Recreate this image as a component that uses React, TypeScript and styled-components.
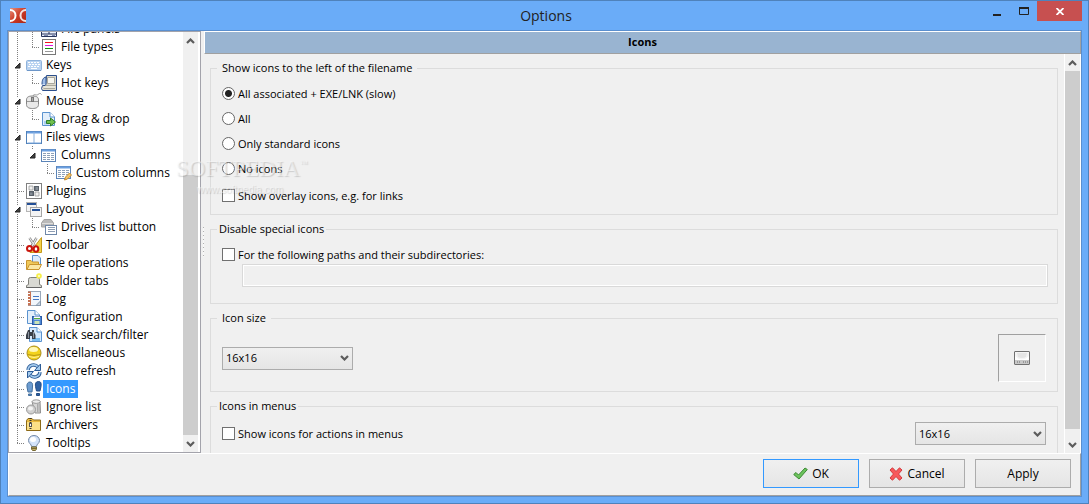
import React, { useState } from "react";
import styled, { createGlobalStyle, css } from "styled-components";

const GlobalStyle = createGlobalStyle`
  * { box-sizing: border-box; }
  body {
    margin: 0;
    font-family: "Open Sans", "Noto Sans", sans-serif;
    font-size: 11px;
    line-height: 16px;
    color: #000;
  }
  button, select, input { font: inherit; color: inherit; margin: 0; }
`;

/* ---------- window frame ---------- */

const Window = styled.div`
  position: relative;
  display: flex;
  flex-direction: column;
  height: 100vh;
  min-height: 300px;
  padding: 0 6px 6px;
  background: #6aacf8;
  border: 1px solid #4f82bb;
`;

const TitleBar = styled.header`
  flex: none;
  display: grid;
  grid-template-columns: 1fr auto 1fr;
  align-items: center;
  height: 29px;
  padding-left: 3px;
`;

const Title = styled.h1`
  margin: 0;
  font-size: 14px;
  line-height: 20px;
  font-weight: 400;
  color: #222;
`;

const Controls = styled.div`
  justify-self: end;
  align-self: start;
  display: flex;
`;

const ControlButton = styled.button<{ $close?: boolean }>`
  display: grid;
  place-items: center;
  width: ${(p) => (p.$close ? 45 : 27)}px;
  height: 20px;
  padding: 0;
  border: 0;
  background: ${(p) => (p.$close ? "#c75050" : "transparent")};
`;

const Client = styled.div`
  flex: 1;
  min-height: 0;
  display: flex;
  flex-direction: column;
  background: #f0f0f0;
  border: 1px solid #5a8fcf;
`;

const Body = styled.div`
  flex: 1;
  min-height: 0;
  display: grid;
  grid-template-columns: 193px 3px minmax(0, 1fr);
`;

const Splitter = styled.div`
  justify-self: end;
  align-self: center;
  width: 1px;
  height: 30px;
  background: repeating-linear-gradient(#b0b0b0 0 1px, #f8f8f8 1px 4px);
`;

/* ---------- scroll bars ---------- */

const ScrollTrack = styled.div`
  flex: none;
  display: flex;
  flex-direction: column;
  width: 15px;
  background: #f0f0f0;
`;

const ScrollArrow = styled.button`
  flex: none;
  display: grid;
  place-items: center;
  height: 17px;
  padding: 0;
  border: 0;
  background: transparent;
`;

const ScrollSpace = styled.div<{ $share: number; $thumb?: boolean }>`
  flex: ${(p) => p.$share} 1 0;
  background: ${(p) => (p.$thumb ? "#cdcdcd" : "transparent")};
`;

const Chevron = ({ up }: { up?: boolean }) => (
  <svg width="9" height="6" viewBox="0 0 9 6" aria-hidden="true">
    <path
      d={up ? "M1 5L4.500 1.500L8 5" : "M1 1L4.500 4.500L8 1"}
      fill="none"
      stroke="#5c5c5c"
      strokeWidth="2.200"
    />
  </svg>
);

function ScrollBar({ before, thumb, after }: { before: number; thumb: number; after: number }) {
  return (
    <ScrollTrack>
      <ScrollArrow aria-label="Scroll up"><Chevron up /></ScrollArrow>
      <ScrollSpace $share={before} />
      <ScrollSpace $share={thumb} $thumb />
      <ScrollSpace $share={after} />
      <ScrollArrow aria-label="Scroll down"><Chevron /></ScrollArrow>
    </ScrollTrack>
  );
}

/* ---------- tree ---------- */

const TreePanel = styled.nav`
  display: flex;
  min-height: 0;
  padding-right: 2px;
  background: #fff;
  border: 1px solid #a3a3ab;
`;

const TreeList = styled.ul`
  flex: 1;
  min-height: 0;
  display: flex;
  flex-direction: column;
  justify-content: flex-end;
  margin: 0;
  padding: 0 0 0 1px;
  overflow: hidden;
  list-style: none;
`;

const TreeRow = styled.li`
  flex: none;
  display: flex;
  align-items: center;
  height: 18px;
`;

type Guide = "line" | "tee" | "end" | "open" | "openTop" | "none";

const vertical = "repeating-linear-gradient(#808080 0 1px, transparent 1px 2px)";
const horizontal = "repeating-linear-gradient(90deg, #808080 0 1px, transparent 1px 2px)";

const GuideCell = styled.span<{ $kind: Guide }>`
  display: grid;
  place-items: center;
  width: 15px;
  height: 18px;
  background-repeat: no-repeat;
  ${(p) => (p.$kind === "line" || p.$kind === "open") && css`
    background-image: ${vertical};
    background-size: 1px 18px;
    background-position: 7px 0;
  `}
  ${(p) => p.$kind === "openTop" && css`
    background-image: ${vertical};
    background-size: 1px 4px;
    background-position: 7px 0;
  `}
  ${(p) => (p.$kind === "tee" || p.$kind === "end") && css`
    background-image: ${vertical}, ${horizontal};
    background-size: 1px ${p.$kind === "tee" ? 18 : 10}px, 8px 1px;
    background-position: 7px 0, 7px 9px;
  `}
`;

const TreeIcon = styled.svg`
  flex: none;
  width: 16px;
  height: 16px;
  margin: 0 1px;
`;

const TreeLabel = styled.a<{ $selected?: boolean }>`
  padding: 0 3px;
  font-size: 12px;
  line-height: 18px;
  text-decoration: none;
  white-space: nowrap;
  color: ${(p) => (p.$selected ? "#fff" : "#000")};
  background: ${(p) => (p.$selected ? "#3399ff" : "transparent")};
`;

const Page = ({ tint = "#e3effb" }: { tint?: string }) => (
  <>
    <path d="M1.500 1.500H9L13.500 6V14.500H1.500Z" fill={tint} stroke="#5b93cf" />
    <path d="M9 1.500V6H13.500" fill="#fff" stroke="#5b93cf" />
  </>
);

const icons: Record<string, React.ReactNode> = {
  panels: (
    <>
      <path d="M.5 1V15.500H15.500V1" fill="#e8eefa" stroke="#26335c" />
      <path d="M1 13H15M8 2V13" stroke="#26335c" strokeWidth="1" />
      <path d="M3 14.500H7M11 14.500H14" stroke="#7d8bb0" />
    </>
  ),
  types: (
    <>
      <rect x="1.500" y=".5" width="13" height="15" fill="#fff" stroke="#777" />
      <path d="M4 3.500H12" stroke="#f01818" />
      <path d="M4 6.500H12" stroke="#e018e0" />
      <path d="M4 9.500H12" stroke="#109010" />
      <path d="M4 12.500H12" stroke="#999" />
    </>
  ),
  keys: (
    <>
      <rect x=".5" y="3.500" width="15" height="10" rx="1" fill="#b9d3f1" stroke="#8fb3dc" />
      <path d="M2 5.500H14M3 7.500H14M2 9.500H14" stroke="#fff" strokeDasharray="2 1" />
      <path d="M5 11.500H11" stroke="#fff" />
      <path d="M1 13.500H15" stroke="#6d96c8" />
    </>
  ),
  hotkeys: (
    <>
      <path d="M5.500 .5H15.500V15.500H1.500L.5 13.500L1.500 10.500H4.500Z" fill="#dcd9cc" stroke="#2c4f8c" />
      <path d="M6.500 2.500H13.500V8.500H6.500Z" fill="#f7f6ef" stroke="#a9a79c" />
      <path d="M4.500 10.500H15M2.500 13.500H14" stroke="#aaa89c" />
      <path d="M3 11.500H14V12.500H3Z" fill="#f3f1e7" />
      <path d="M1 9.500C1 5 2 2.500 5 2V9.500" fill="#9fbde6" stroke="#2c4f8c" />
    </>
  ),
  mouse: (
    <>
      <path d="M7 3C8 0 10 3 12 1.500S14 0 15.500 1.500" fill="none" stroke="#999" />
      <path d="M.5 7C.5 4.500 2 3 6.500 3S12.500 4.500 12.500 7V11.500C12.500 14.500 10 15.500 6.500 15.500S.5 14.500 .5 11.500Z" fill="#e9e9e9" stroke="#858585" />
      <path d="M1 8.500H12M6.500 4V8" stroke="#9a9a9a" />
      <rect x="5.500" y="4.500" width="2" height="4" fill="#aaa" stroke="#777" />
    </>
  ),
  drag: (
    <>
      <Page />
      <path d="M3 13.500V10H8V13.500" fill="#a8ccf0" />
      <path d="M5.500 9.500H9.500V7L14.500 11L9.500 15V12.500H5.500Z" fill="#6fbf4c" stroke="#2f7d2a" />
    </>
  ),
  views: (
    <>
      <rect x=".5" y="2.500" width="15" height="12" fill="#fff" stroke="#5080b8" />
      <path d="M1 3.500H15" stroke="#6a9fe0" strokeWidth="2" />
      <path d="M8 3V14" stroke="#8cb0da" />
      <path d="M1.500 14H15" stroke="#7aa7dc" />
    </>
  ),
  columns: (
    <>
      <rect x=".5" y="2.500" width="14" height="12" fill="#fff" stroke="#5b84b8" />
      <path d="M1 3.500H14" stroke="#6a9fe0" strokeWidth="2" />
      <path d="M2 6.500H13M2 8.500H13M2 10.500H13M2 12.500H13" stroke="#8da0b8" strokeDasharray="3 1" />
    </>
  ),
  custom: (
    <>
      <rect x=".5" y="1.500" width="14" height="12" fill="#fff" stroke="#5b84b8" />
      <path d="M1 2.500H14" stroke="#6a9fe0" strokeWidth="2" />
      <path d="M2 5.500H13M2 7.500H13M2 9.500H13M2 11.500H8" stroke="#8da0b8" strokeDasharray="3 1" />
      <path d="M8.500 15L9.500 12L13.500 8L15.500 10L11.500 14Z" fill="#f3c566" stroke="#c98a2b" />
    </>
  ),
  plugins: (
    <>
      <rect x=".5" y=".5" width="15" height="15" fill="#fff" stroke="#808080" />
      <path d="M3 3H7V7H3ZM9 9H13V13H9Z" fill="#f1f1f1" stroke="#999" strokeWidth=".8" />
      <path d="M8 3H13V8H8ZM3 8H8V13H3Z" fill="#59616a" />
      <path d="M9.500 4H12V7H9.500ZM4 9.500H6.500V12H4Z" fill="#858d96" />
    </>
  ),
  layout: (
    <>
      <rect x=".5" y="1.500" width="10" height="9" fill="#f4f4f4" stroke="#b5b5b5" />
      <path d="M1 3H10" stroke="#234f96" strokeWidth="2" />
      <rect x="4.500" y="6.500" width="11" height="9" fill="#f4f4f4" stroke="#a5a5a5" />
      <path d="M6 9H14" stroke="#234f96" strokeWidth="2" />
    </>
  ),
  drives: (
    <>
      <path d="M.5 4L3 .5H10L12.500 4V8H.5Z" fill="#b9b9b9" stroke="#a4a4a4" />
      <path d="M1 4.500H12" stroke="#dedede" />
      <rect x="4.500" y="6.500" width="11" height="9" fill="#fff" stroke="#6f87a8" />
      <path d="M7 8.500H14M7 10.500H14M7 12.500H14" stroke="#8d9db3" />
    </>
  ),
  toolbar: (
    <>
      <path d="M15.500 .5V15.500H4Z" fill="#f5d24a" stroke="#c49a1a" />
      <path d="M3.500 1L9.500 10M10.500 1L5 10" stroke="#858585" strokeWidth="2.400" />
      <path d="M3.500 1L9 9M10.500 1L6 9" stroke="#ececec" strokeWidth="1.100" />
      <ellipse cx="3.500" cy="11.500" rx="2.500" ry="2.500" fill="#fff" stroke="#c9140c" strokeWidth="2" />
      <ellipse cx="10" cy="12" rx="2.300" ry="2.800" fill="#fff" stroke="#c9140c" strokeWidth="2" />
    </>
  ),
  operations: (
    <>
      <path d="M6.500 .5H12L14.500 3V10.500H6.500Z" fill="#dcebfb" stroke="#5b93cf" />
      <path d="M.5 5.500H5L6.500 7H12.500V14.500H.5Z" fill="#f0c95a" stroke="#c9942e" />
      <path d="M1 14.500L3.500 9.500H15.500L13 14.500Z" fill="#fbe7a4" stroke="#c9942e" />
    </>
  ),
  tabs: (
    <>
      <path d="M.5 14.500V12.500L2.500 11.500V6.500Q2.500 4.500 4.500 4.500H11.500Q13.500 4.500 13.500 6.500V11.500L15.500 12.500V14.500Z" fill="#d9d9d3" stroke="#80807a" />
      <path d="M.5 14.500H15.500" stroke="#666" />
      <circle cx="13" cy="3" r="2.800" fill="#f7ef4a" />
      <circle cx="13" cy="3" r="1" fill="#fffde0" />
    </>
  ),
  log: (
    <>
      <rect x="2.500" y=".5" width="12" height="14" fill="#f1f6fc" stroke="#9aa9ba" />
      <path d="M2 .5H5V14.500H2Z" fill="#c67252" />
      <path d="M1 2.500H4M1 5.500H4M1 8.500H4M1 11.500H4" stroke="#fff" />
      <path d="M7 5.500H13M7 8.500H13" stroke="#4377c4" />
      <path d="M14.500 10L10 14.500H14.500Z" fill="#c8d5e4" stroke="#8798ab" />
    </>
  ),
  config: (
    <>
      <Page />
      <rect x="6.500" y="7.500" width="9" height="8" fill="#4d87d6" stroke="#2c5ca6" />
      <path d="M8 7.500H14V10.500H8Z" fill="#fff" />
      <path d="M8.500 12H13.500V15H8.500Z" fill="#c9e3b5" />
      <path d="M8 9.500H14" stroke="#58ad3c" />
    </>
  ),
  search: (
    <>
      <path d="M3.500 .5H11L15.500 5V14.500H3.500Z" fill="#d4e9fd" stroke="#5b93cf" />
      <path d="M11 .5V5H15.500" fill="#fff" stroke="#5b93cf" />
      <path d="M6 12.500H14" stroke="#78bdf0" strokeWidth="3" />
      <path d="M2 3H4V5H6V3H8V5L9.500 8V12H6V9H4V12H0V8Z" fill="#3b4048" />
      <path d="M2.500 5V11M7.500 5V11" stroke="#8c949f" />
    </>
  ),
  misc: (
    <>
      <circle cx="8" cy="8" r="7" fill="#f2d21c" stroke="#a98d1d" />
      <ellipse cx="7.500" cy="4.500" rx="4.500" ry="2.500" fill="#fff8b8" />
      <path d="M1.500 9.500Q8 11.500 14.500 9.500" fill="none" stroke="#b99814" />
      <path d="M3 11.500Q8 13.500 13 11.500" fill="none" stroke="#fff099" />
    </>
  ),
  refresh: (
    <>
      <path d="M2 7C2.500 1.500 9 .5 12 4" fill="none" stroke="#2c5b96" strokeWidth="3.400" />
      <path d="M2 7C2.500 1.500 9 .5 12 4" fill="none" stroke="#a4cbee" strokeWidth="1.600" />
      <path d="M14.500 1V7.500H8.500Z" fill="#a4cbee" stroke="#2c5b96" />
      <path d="M14 9C13.500 14.500 7 15.500 4 12" fill="none" stroke="#2c5b96" strokeWidth="3.400" />
      <path d="M14 9C13.500 14.500 7 15.500 4 12" fill="none" stroke="#a4cbee" strokeWidth="1.600" />
      <path d="M1.500 15V8.500H7.500Z" fill="#a4cbee" stroke="#2c5b96" />
    </>
  ),
  steps: (
    <>
      <path d="M1 6C.5 2.500 2 1 4 1S7 2.500 6.500 6L6 11H2Z" fill="#6c9cd0" stroke="#44719f" />
      <path d="M2.500 13H5.500V14.500H2.500Z" fill="#5c8cc0" stroke="#44719f" />
      <path d="M9.500 5.500C9 1.500 10.500 .5 12.500 .5S15.500 1.500 15 5.500L14 10H10.500Z" fill="#2f62a3" stroke="#234c85" />
      <path d="M10.500 12.500H13.500V14.500H10.500Z" fill="#2f62a3" stroke="#234c85" />
    </>
  ),
  ignore: (
    <>
      <path d="M6 2.500L14 2L14.500 14H9Z" fill="#d6d6d6" stroke="#8f8f8f" />
      <ellipse cx="10.200" cy="2.600" rx="4" ry="1.800" fill="#ededed" stroke="#9a9a9a" />
      <path d="M11.500 5V13M13 5V13" stroke="#aaa" />
      <circle cx="5" cy="10.500" r="4.500" fill="#d0d0d0" stroke="#9a9a9a" />
      <ellipse cx="4.500" cy="9.500" rx="2.500" ry="2" fill="#f3f3f3" />
    </>
  ),
  archive: (
    <>
      <path d="M.5 3.500L2 1.500H6L7.500 3H14.500V13.500H.5Z" fill="#e9b93f" stroke="#8c6a18" />
      <path d="M1 5H14V13H1Z" fill="#fbdf87" />
      <path d="M4.500 1V13" stroke="#333" strokeWidth="2" strokeDasharray="1 1" />
      <rect x="3.500" y="6.500" width="2" height="3" fill="#fff" stroke="#555" />
    </>
  ),
  bulb: (
    <>
      <path d="M8 .5C4.500 .5 2.500 3 2.500 5.500C2.500 8.500 5.500 9 5.500 11.500H10.500C10.500 9 13.500 8.500 13.500 5.500C13.500 3 11.500 .5 8 .5Z" fill="#d3e3fa" stroke="#7388a6" />
      <ellipse cx="7" cy="4.500" rx="3" ry="2.500" fill="#fff" />
      <path d="M5.500 12H10.500V14L9.500 15.500H6.500L5.500 14Z" fill="#c9b46a" stroke="#786a35" />
      <path d="M6 13.500H10" stroke="#786a35" />
    </>
  ),
};

interface Node {
  label: string;
  icon: string;
  guides: Guide[];
}

const nodes: Node[] = [
  { label: "File panels", icon: "panels", guides: ["line", "tee"] },
  { label: "File types", icon: "types", guides: ["line", "end"] },
  { label: "Keys", icon: "keys", guides: ["open"] },
  { label: "Hot keys", icon: "hotkeys", guides: ["line", "end"] },
  { label: "Mouse", icon: "mouse", guides: ["open"] },
  { label: "Drag & drop", icon: "drag", guides: ["line", "end"] },
  { label: "Files views", icon: "views", guides: ["open"] },
  { label: "Columns", icon: "columns", guides: ["line", "openTop"] },
  { label: "Custom columns", icon: "custom", guides: ["line", "none", "end"] },
  { label: "Plugins", icon: "plugins", guides: ["tee"] },
  { label: "Layout", icon: "layout", guides: ["open"] },
  { label: "Drives list button", icon: "drives", guides: ["line", "end"] },
  { label: "Toolbar", icon: "toolbar", guides: ["tee"] },
  { label: "File operations", icon: "operations", guides: ["tee"] },
  { label: "Folder tabs", icon: "tabs", guides: ["tee"] },
  { label: "Log", icon: "log", guides: ["tee"] },
  { label: "Configuration", icon: "config", guides: ["tee"] },
  { label: "Quick search/filter", icon: "search", guides: ["tee"] },
  { label: "Miscellaneous", icon: "misc", guides: ["tee"] },
  { label: "Auto refresh", icon: "refresh", guides: ["tee"] },
  { label: "Icons", icon: "steps", guides: ["tee"] },
  { label: "Ignore list", icon: "ignore", guides: ["tee"] },
  { label: "Archivers", icon: "archive", guides: ["tee"] },
  { label: "Tooltips", icon: "bulb", guides: ["end"] },
];

const Expander = () => (
  <svg width="7" height="7" viewBox="0 0 7 7" aria-hidden="true">
    <path d="M0 0H7V7H0Z" fill="#fff" />
    <path d="M6 1V6H1Z" fill="#404040" stroke="#262626" />
  </svg>
);

/* ---------- settings page ---------- */

const Main = styled.main`
  display: flex;
  flex-direction: column;
  min-height: 0;
`;

const PageHeader = styled.h2`
  flex: none;
  margin: 0;
  padding-bottom: 2px;
  font-size: 11px;
  line-height: 19px;
  font-weight: 700;
  text-align: center;
  background: #99b4d1;
  border: 1px solid #a0a0a0;
  border-top-color: #fff;
  border-left-color: #fff;
`;

const ScrollView = styled.div`
  flex: 1;
  min-height: 0;
  display: flex;
  border-right: 1px solid #fff;
`;

const Groups = styled.form`
  flex: 1;
  min-width: 0;
  padding: 6px 6px 0;
  overflow: hidden;
  border-right: 1px solid #fff;
`;

const Group = styled.fieldset<{ $gap: number }>`
  min-width: 0;
  margin: 0 0 6px;
  padding: 0 9px 0 6px;
  border: 1px solid #dcdcdc;

  legend { padding: 0 ${(p) => p.$gap}px; }
`;

const Rows = styled.div<{ $top: number; $bottom: number }>`
  display: flex;
  flex-direction: column;
  padding: ${(p) => p.$top}px 0 ${(p) => p.$bottom}px 5px;
`;

const SplitRow = styled.div`
  display: flex;
  align-items: center;
  justify-content: space-between;
  padding-right: 2px;
`;

const Option = styled.label<{ $height: number }>`
  display: flex;
  align-items: center;
  gap: 3px;
  height: ${(p) => p.$height}px;
`;

const Radio = styled.input.attrs({ type: "radio" })`
  appearance: none;
  width: 13px;
  height: 13px;
  border: 1px solid #666;
  border-radius: 50%;
  background: #fff;
  &:checked { background: radial-gradient(circle, #222 0 3px, #fff 4px); }
`;

const Check = styled.input.attrs({ type: "checkbox" })`
  appearance: none;
  width: 13px;
  height: 13px;
  border: 1px solid #707070;
  background: #fff;
  &:checked { background: radial-gradient(circle, #222 0 3px, #fff 4px); }
`;

const PathInput = styled.input`
  height: 23px;
  margin-left: 20px;
  padding: 0 4px;
  background: #f0f0f0;
  border: 1px solid #d9d9d9;
  box-shadow: inset 0 0 0 1px #fff;
`;

const SelectBox = styled.span`
  display: grid;
  align-items: center;
  width: 131px;

  > * { grid-area: 1 / 1; }
  > svg { justify-self: end; margin-right: 4px; pointer-events: none; }
`;

const Select = styled.select`
  appearance: none;
  height: 23px;
  padding: 0 3px;
  border: 1px solid #acacac;
  border-radius: 0;
  background: linear-gradient(#f0f0f0, #e5e5e5);
`;

const Preview = styled.div`
  display: grid;
  place-items: center;
  width: 48px;
  height: 48px;
  border: 1px solid #fff;
  border-top-color: #a0a0a0;
  border-left-color: #a0a0a0;
`;

const DriveIcon = () => (
  <svg width="16" height="14" viewBox="0 0 16 14" role="img" aria-label="Icon preview">
    <rect x=".5" y=".5" width="15" height="13" rx=".5" fill="#f4f4f4" stroke="#707070" />
    <path d="M1 5Q8 12 15 5V9H1Z" fill="#fff" />
    <path d="M3 2H13L12 6Q8 8 4 6Z" fill="#e4e4e4" />
    <path d="M1 9H15V13H1Z" fill="#c8c8c8" />
    <path d="M3 11H7M9 11H14" stroke="#999" strokeWidth="2" strokeDasharray="1 1" />
  </svg>
);

function SizeSelect({ label }: { label: string }) {
  return (
    <SelectBox>
      <Select aria-label={label} defaultValue="16x16">
        <option>16x16</option>
        <option>24x24</option>
        <option>32x32</option>
      </Select>
      <Chevron />
    </SelectBox>
  );
}

/* ---------- footer ---------- */

const Footer = styled.footer`
  flex: none;
  display: flex;
  justify-content: flex-end;
  gap: 10px;
  padding: 5px 9px 7px;
  border: 1px solid #a0a0a0;
  border-top-color: #fff;
  border-left-color: #fff;
`;

const PushButton = styled.button<{ $primary?: boolean }>`
  display: flex;
  align-items: center;
  justify-content: center;
  gap: 4px;
  width: 96px;
  height: 29px;
  padding: 0;
  font-size: 12px;
  border: 1px solid ${(p) => (p.$primary ? "#3399ff" : "#acacac")};
  background: linear-gradient(#f0f0f0, #e5e5e5);
`;

const Watermark = styled.div`
  position: absolute;
  left: 175px;
  top: 154px;
  pointer-events: none;
  font-family: "Liberation Serif", serif;
  font-size: 23px;
  line-height: 28px;
  color: rgba(250, 250, 250, 0.5);
  text-shadow: 1px 1px 1px rgba(120, 120, 120, 0.3);

  sup { font-size: 8px; line-height: 8px; vertical-align: 10px; }
  small {
    display: block;
    padding-left: 21px;
    font-family: "Liberation Sans", sans-serif;
    font-size: 10px;
    line-height: 14px;
  }
`;

const options = ["All associated + EXE/LNK (slow)", "All", "Only standard icons", "No icons"];

export default function App() {
  const [mode, setMode] = useState(options[0]);

  return (
    <>
      <GlobalStyle />
      <Window>
        <TitleBar>
          <svg width="16" height="15" viewBox="0 0 16 15" aria-hidden="true">
            <defs>
              <linearGradient id="logo" x1="0" y1="0" x2="1" y2="1">
                <stop offset="0" stopColor="#e8907c" />
                <stop offset=".5" stopColor="#cc3a26" />
                <stop offset="1" stopColor="#a82616" />
              </linearGradient>
            </defs>
            <rect width="16" height="15" rx="1" fill="url(#logo)" />
            <path d="M0 2C3.500 2 5.500 4.500 5.500 7.500S3.500 13 0 13" fill="none" stroke="#fff" strokeWidth="2" />
            <path d="M16 2C12.500 2 10.500 4.500 10.500 7.500S12.500 13 16 13" fill="none" stroke="#f3e2de" strokeWidth="2" />
          </svg>
          <Title>Options</Title>
          <Controls>
            <ControlButton aria-label="Minimize">
              <svg width="8" height="14" viewBox="0 0 8 14"><path d="M0 11H8" stroke="#222" strokeWidth="2" /></svg>
            </ControlButton>
            <ControlButton aria-label="Maximize">
              <svg width="10" height="8" viewBox="0 0 10 8">
                <path d="M.5 0V7.500H9.500V0" fill="none" stroke="#222" />
                <path d="M0 1H10" stroke="#222" strokeWidth="2" />
              </svg>
            </ControlButton>
            <ControlButton $close aria-label="Close">
              <svg width="8" height="7" viewBox="0 0 8 7">
                <path d="M.5 0L7.500 7M7.500 0L.5 7" stroke="#fff" strokeWidth="1.800" />
              </svg>
            </ControlButton>
          </Controls>
        </TitleBar>

        <Client>
          <Body>
            <TreePanel aria-label="Option pages">
              <TreeList>
                {nodes.map((n) => (
                  <TreeRow key={n.label}>
                    {n.guides.map((g, i) => (
                      <GuideCell key={i} $kind={g}>
                        {(g === "open" || g === "openTop") && <Expander />}
                      </GuideCell>
                    ))}
                    <TreeIcon viewBox="0 0 16 16" aria-hidden="true">{icons[n.icon]}</TreeIcon>
                    <TreeLabel href="#" $selected={n.label === "Icons"}>{n.label}</TreeLabel>
                  </TreeRow>
                ))}
              </TreeList>
              <ScrollBar before={125} thumb={259} after={0} />
            </TreePanel>

            <Splitter />

            <Main>
              <PageHeader>Icons</PageHeader>
              <ScrollView>
                <Groups>
                  <Group $gap={5}>
                    <legend>Show icons to the left of the filename</legend>
                    <Rows $top={5} $bottom={4}>
                      {options.map((o) => (
                        <Option key={o} $height={25}>
                          <Radio name="icon-mode" checked={mode === o} onChange={() => setMode(o)} />
                          {o}
                        </Option>
                      ))}
                      <Option $height={29}>
                        <Check />
                        Show overlay icons, e.g. for links
                      </Option>
                    </Rows>
                  </Group>

                  <Group $gap={2}>
                    <legend>Disable special icons</legend>
                    <Rows $top={8} $bottom={16}>
                      <Option $height={19}>
                        <Check />
                        For the following paths and their subdirectories:
                      </Option>
                      <PathInput type="text" aria-label="Paths" disabled />
                    </Rows>
                  </Group>

                  <Group $gap={5}>
                    <legend>Icon size</legend>
                    <Rows $top={8} $bottom={9}>
                      <SplitRow>
                        <SizeSelect label="Icon size" />
                        <Preview><DriveIcon /></Preview>
                      </SplitRow>
                    </Rows>
                  </Group>

                  <Group $gap={2}>
                    <legend>Icons in menus</legend>
                    <Rows $top={8} $bottom={16}>
                      <SplitRow>
                        <Option $height={23}>
                          <Check />
                          Show icons for actions in menus
                        </Option>
                        <SizeSelect label="Menu icon size" />
                      </SplitRow>
                    </Rows>
                  </Group>
                </Groups>
                <ScrollBar before={0} thumb={358} after={7} />
              </ScrollView>
            </Main>
          </Body>

          <Footer>
            <PushButton $primary>
              <svg width="15" height="13" viewBox="0 0 15 13" aria-hidden="true">
                <path d="M.7 7.500L3 5.500L5.500 8L12 1L14.300 2.500L6 12Z" fill="#6cc35c" stroke="#3c8a34" />
              </svg>
              OK
            </PushButton>
            <PushButton>
              <svg width="14" height="14" viewBox="0 0 14 14" aria-hidden="true">
                <path d="M1 3L3.500 .8L7 4.500L10.500 .8L13 3L9.500 7L13 11L10.500 13.200L7 9.500L3.500 13.200L1 11L4.500 7Z" fill="#f8595c" stroke="#d23a3d" />
              </svg>
              Cancel
            </PushButton>
            <PushButton>Apply</PushButton>
          </Footer>
        </Client>

        <Watermark aria-hidden="true">
          SOFTPEDIA<sup>™</sup>
          <small>www.softpedia.com</small>
        </Watermark>
      </Window>
    </>
  );
}
